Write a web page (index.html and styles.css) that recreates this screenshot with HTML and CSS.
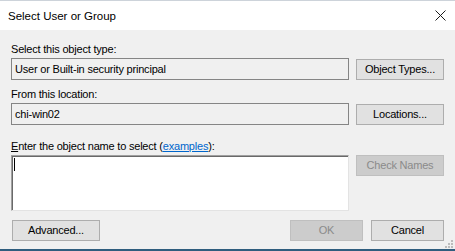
FILE: index.html
```html
<!DOCTYPE html>
<html>
<head lang="en">
    <meta charset="UTF-8">
    <title>Select User or Group</title>
    <link rel="stylesheet" href="styles.css">
</head>
<body>
<div class="dialog">
    <div class="titlebar">
        <span class="title">Select User or Group</span>
        <svg class="close" width="11" height="11" viewBox="0 0 11 11">
            <path d="M0.5 0.5 L10.5 10.5 M10.5 0.5 L0.5 10.5" stroke="#1a1a1a" stroke-width="1"/>
        </svg>
    </div>
    <div class="content">
        <div class="label">Select this object type:</div>
        <div class="row">
            <div class="box">User or Built-in security principal</div>
            <div class="btn">Object Types...</div>
        </div>

        <div class="label second">From this location:</div>
        <div class="row">
            <div class="box">chi-win02</div>
            <div class="btn">Locations...</div>
        </div>

        <div class="label third"><u>E</u>nter the object name to select (<a href="#">examples</a>):</div>
        <div class="row top">
            <div class="namebox"><span class="caret"></span></div>
            <div class="btn off">Check Names</div>
        </div>

        <div class="footer">
            <div class="btn wide">Advanced...</div>
            <div class="right">
                <div class="btn small off">OK</div>
                <div class="btn small">Cancel</div>
            </div>
        </div>
    </div>
    <svg class="grip" width="8" height="8" viewBox="0 0 8 8">
        <rect x="6" y="0" width="2" height="2" fill="#bcbcbc"/>
        <rect x="3" y="3" width="2" height="2" fill="#bcbcbc"/>
        <rect x="6" y="3" width="2" height="2" fill="#bcbcbc"/>
        <rect x="0" y="6" width="2" height="2" fill="#bcbcbc"/>
        <rect x="3" y="6" width="2" height="2" fill="#bcbcbc"/>
        <rect x="6" y="6" width="2" height="2" fill="#bcbcbc"/>
    </svg>
</div>
</body>
</html>
```

FILE: styles.css
```css
*{
    margin: 0;
    padding: 0;
    box-sizing: border-box;
}
body{
    font-family: "Liberation Sans", Arial, sans-serif;
    font-size: 11px;
    letter-spacing: -0.2px;
    color: #000;
    background-color: #f0f0f0;
}
.dialog{
    position: relative;
    width: 455px;
    height: 251px;
    background-color: #f0f0f0;
    border-bottom: 2px solid #2f5d7e;
}
.titlebar{
    display: flex;
    align-items: center;
    justify-content: space-between;
    height: 30px;
    padding: 0 9px 0 8px;
    background-color: #fff;
    border-top: 1px solid #cdd3da;
}
.title{
    font-size: 11.5px;
    letter-spacing: 0;
    padding-top: 1px;
}
.close{
    display: block;
    margin-top: -1px;
}
.content{
    padding: 12px 11px 0 11px;
}
.label{
    height: 14px;
    line-height: 14px;
    margin-bottom: 2px;
}
.label.second{
    margin-top: 7px;
}
.label.third{
    margin-top: 14px;
}
.label a{
    color: #0066cc;
}
.row{
    display: flex;
    align-items: flex-end;
    gap: 7px;
}
.row.top{
    align-items: flex-start;
}
.box{
    width: 338px;
    height: 22px;
    line-height: 20px;
    padding-left: 3px;
    border: 1px solid #858585;
    background-color: #f0f0f0;
}
.btn{
    width: 88px;
    height: 21px;
    line-height: 19px;
    text-align: center;
    border: 1px solid #adadad;
    background-color: #e1e1e1;
}
.btn.off{
    color: #8a8a8a;
    background-color: #cccccc;
    border-color: #bfbfbf;
}
.btn.small{
    width: 73px;
}
.namebox{
    width: 338px;
    height: 56px;
    padding: 2px 0 0 2px;
    background-color: #fff;
    border-top: 1px solid #a0a0a0;
    border-left: 1px solid #a0a0a0;
    border-right: 1px solid #e3e3e3;
    border-bottom: 1px solid #e3e3e3;
    box-shadow: inset 1px 1px 0 #696969;
}
.caret{
    display: block;
    width: 1px;
    height: 13px;
    background-color: #000;
}
.footer{
    display: flex;
    justify-content: space-between;
    margin-top: 9px;
    padding-left: 1px;
}
.right{
    display: flex;
    gap: 8px;
}
.grip{
    position: absolute;
    right: 2px;
    bottom: 1px;
}
```
